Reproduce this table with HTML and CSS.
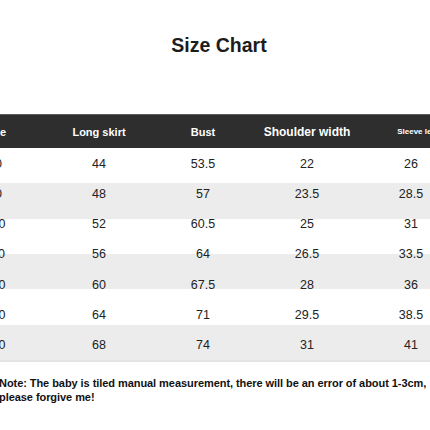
FILE: index.html
```html
<!DOCTYPE html>
<html lang="en">
<head>
    <meta charset="UTF-8">
    <meta name="viewport" content="width=device-width, initial-scale=1.0">
    <title>Size Chart</title>
    <link rel="stylesheet" href="styles.css">
</head>
<body>
    <div class="page">
        <h1 class="title">Size Chart</h1>

        <div class="chart">
            <div class="chart-head">
                <div class="cell">Size</div>
                <div class="cell">Long skirt</div>
                <div class="cell">Bust</div>
                <div class="cell wide">Shoulder width</div>
                <div class="cell tiny">Sleeve length</div>
            </div>
            <div class="chart-body">
                <div class="row"><span>80</span><span>44</span><span>53.5</span><span>22</span><span>26</span></div>
                <div class="row"><span>90</span><span>48</span><span>57</span><span>23.5</span><span>28.5</span></div>
                <div class="row"><span>100</span><span>52</span><span>60.5</span><span>25</span><span>31</span></div>
                <div class="row"><span>110</span><span>56</span><span>64</span><span>26.5</span><span>33.5</span></div>
                <div class="row"><span>120</span><span>60</span><span>67.5</span><span>28</span><span>36</span></div>
                <div class="row"><span>130</span><span>64</span><span>71</span><span>29.5</span><span>38.5</span></div>
                <div class="row"><span>140</span><span>68</span><span>74</span><span>31</span><span>41</span></div>
            </div>
        </div>

        <p class="note">Note: The baby is tiled manual measurement, there will be an error of about 1-3cm,<br>please forgive me!</p>
    </div>
</body>
</html>
```
FILE: styles.css
```css
html, body {
    margin: 0;
    background: #fff;
}
body {
    width: 430px;
    height: 430px;
    overflow: hidden;
    font-family: "Liberation Sans", Arial, sans-serif;
}
.page {
    padding-top: 34px;
}
.title {
    margin: 0 0 57px;
    padding-left: 8px;
    text-align: center;
    font-size: 19.5px;
    line-height: 1.2;
    font-weight: bold;
    color: #1c1c1c;
}
.chart {
    width: 520px;
    margin-left: -57px;
}
.chart-head,
.row {
    display: grid;
    grid-template-columns: repeat(5, 104px);
    align-items: center;
    text-align: center;
}
.chart-head {
    height: 33px;
    background: #2e2e2e;
    border-top: 1px solid #5a5a5a;
    color: #fff;
    font-size: 11px;
    font-weight: bold;
}
.chart-head .wide {
    font-size: 12px;
}
.chart-head .tiny {
    font-size: 8px;
    padding-left: 24px;
}
.chart-body {
    background: repeating-linear-gradient(#fff 0 35.33px, #ececec 35.33px 70.67px);
    border-bottom: 2px solid #e4e4e4;
}
.row {
    height: 30.3px;
    font-size: 12.5px;
    color: #222;
}
.note {
    margin: 15px 0 0 -1px;
    font-size: 11px;
    line-height: 13.5px;
    font-weight: bold;
    letter-spacing: -0.06px;
    color: #111;
    white-space: nowrap;
}
```
